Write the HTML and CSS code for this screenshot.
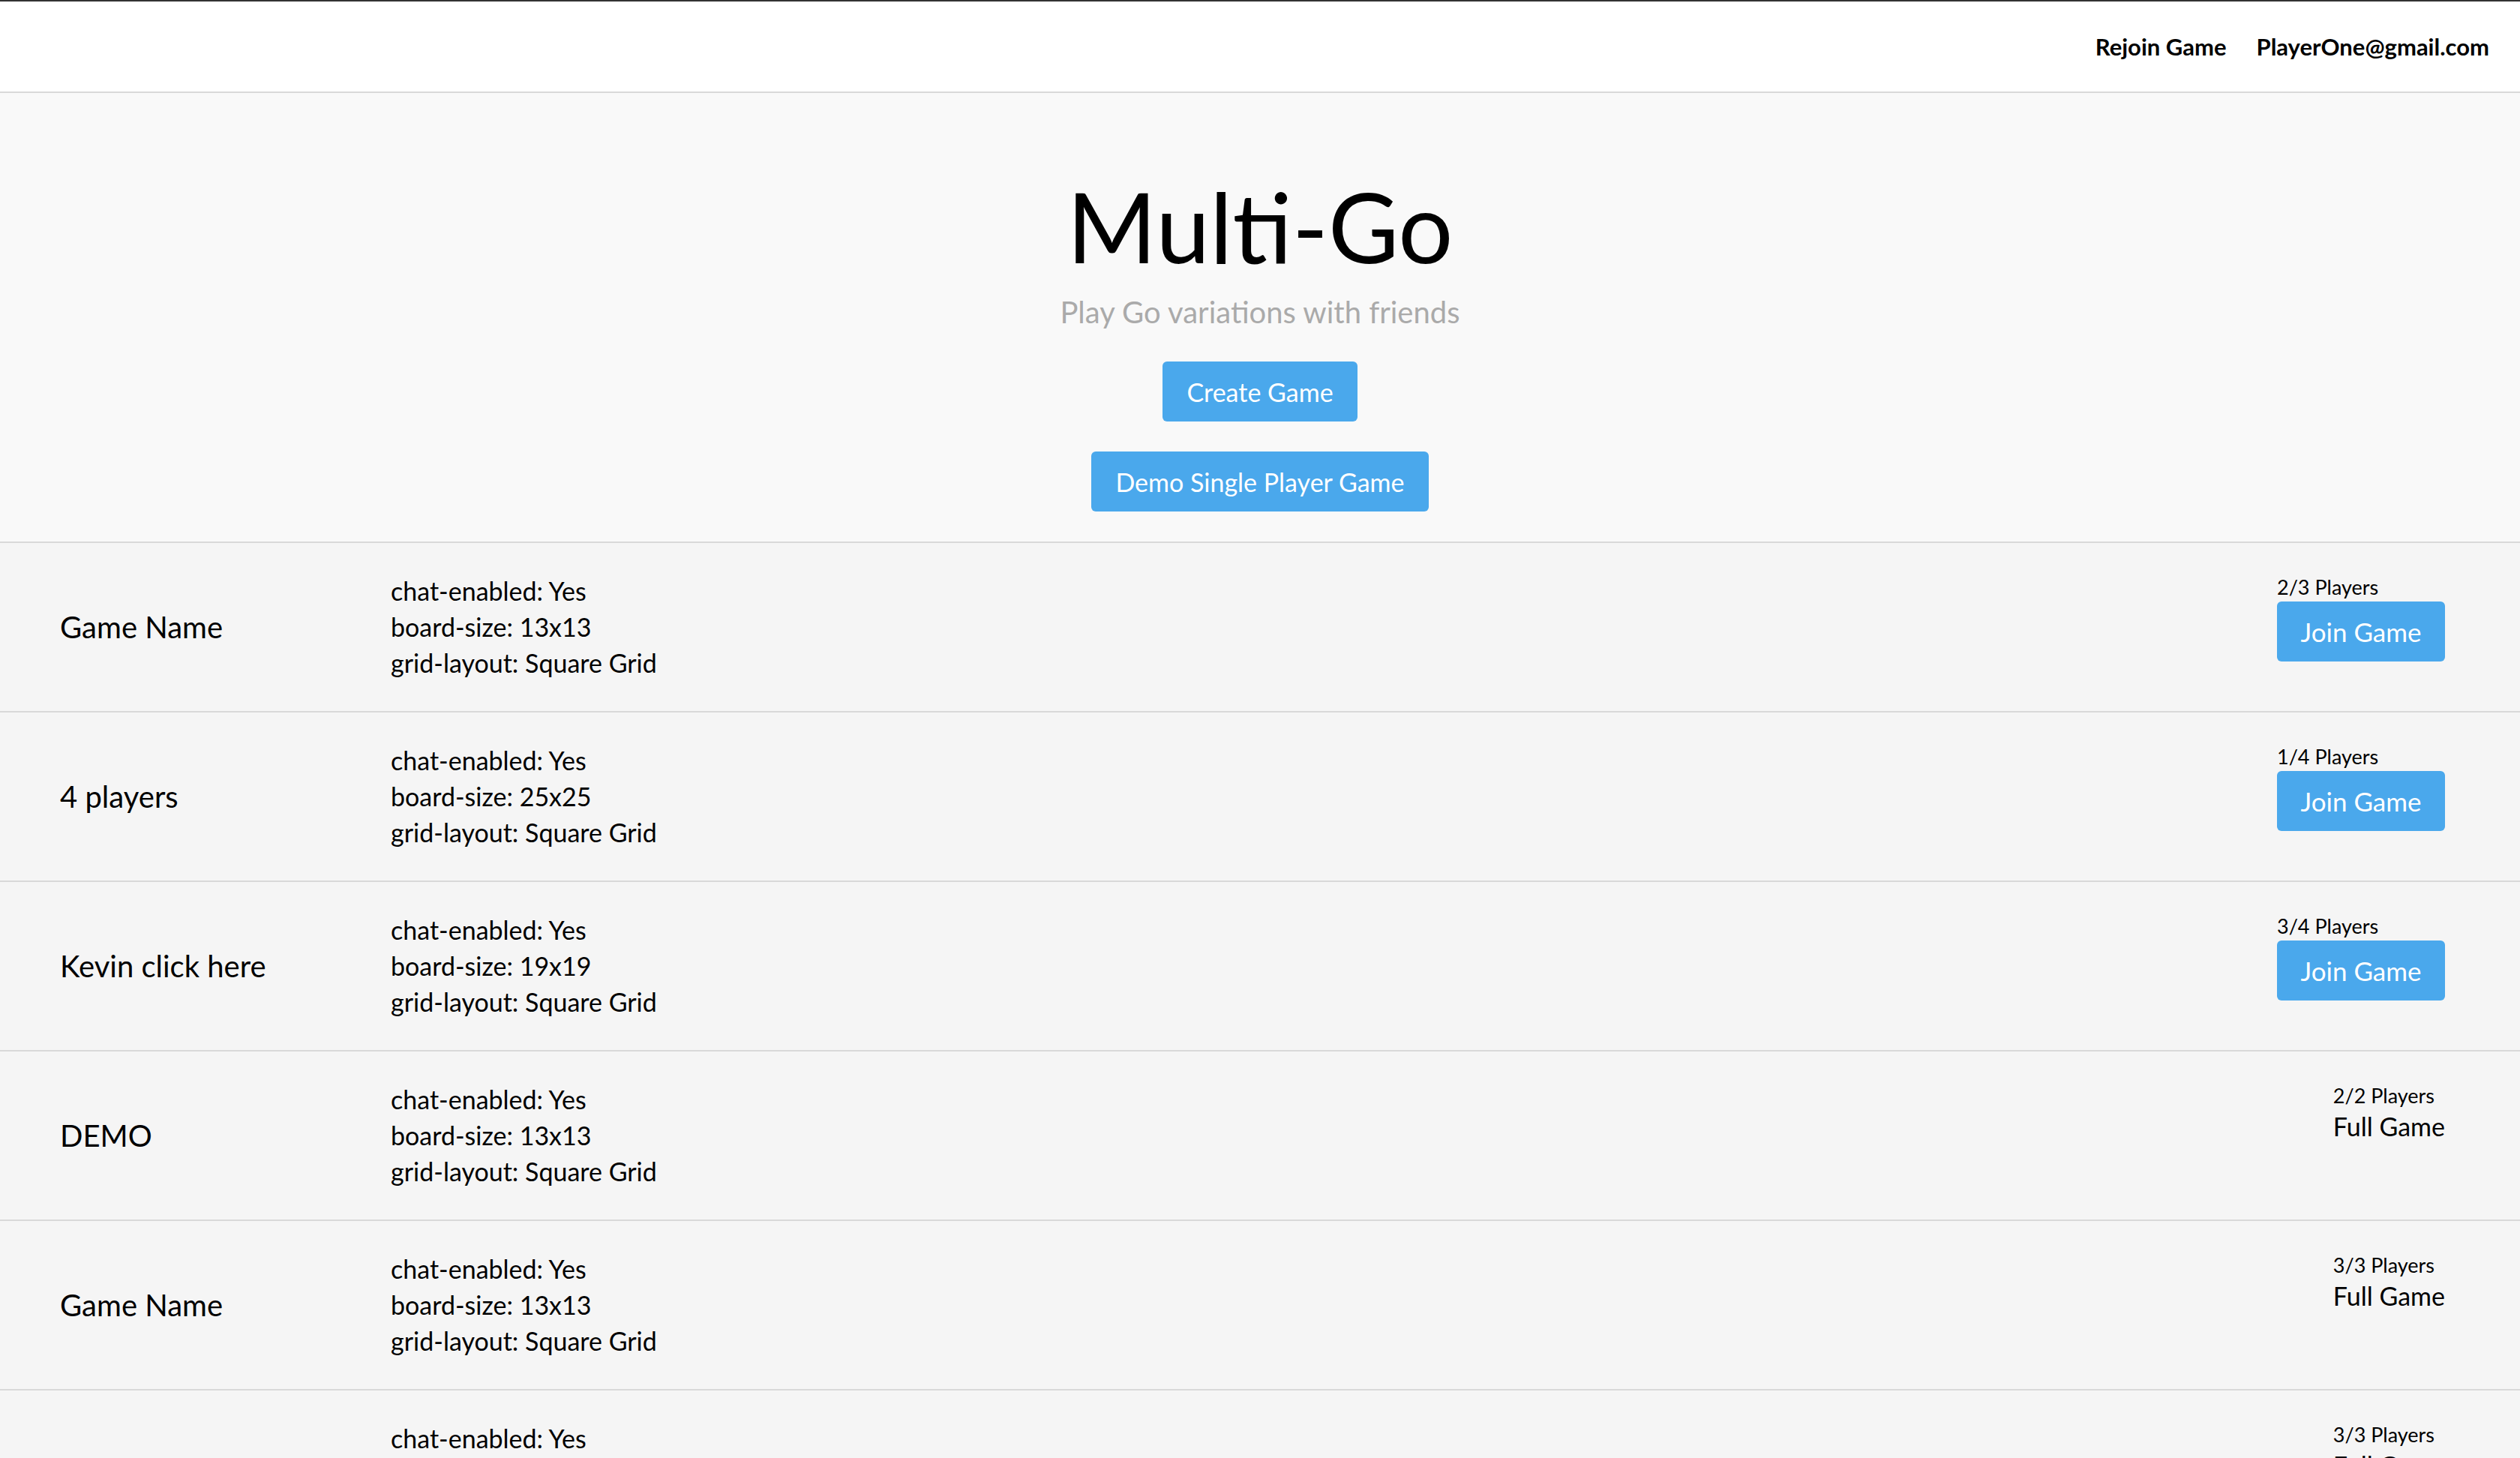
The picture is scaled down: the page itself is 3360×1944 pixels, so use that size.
FILE: index.html
```html
<!DOCTYPE html>
<html lang="en">
<head>
<meta charset="utf-8">
<title>Multi-Go</title>
<link rel="stylesheet" href="styles.css">
</head>
<body>
<header class="topbar">
  <nav class="nav">
    <a class="nav-link" href="#">Rejoin Game</a>
    <a class="nav-link" href="#">PlayerOne@gmail.com</a>
  </nav>
</header>
<section class="hero">
  <h1 class="hero-title">Multi-Go</h1>
  <p class="hero-sub">Play Go variations with friends</p>
  <button class="btn">Create Game</button>
  <button class="btn">Demo Single Player Game</button>
</section>
<main class="games">
  <div class="game-row">
    <div class="game-name">Game Name</div>
    <div class="game-details"><div>chat-enabled: Yes</div><div>board-size: 13x13</div><div>grid-layout: Square Grid</div></div>
    <div class="game-action"><div class="players">2/3 Players</div><button class="btn btn-join">Join Game</button></div>
  </div>
  <div class="game-row">
    <div class="game-name">4 players</div>
    <div class="game-details"><div>chat-enabled: Yes</div><div>board-size: 25x25</div><div>grid-layout: Square Grid</div></div>
    <div class="game-action"><div class="players">1/4 Players</div><button class="btn btn-join">Join Game</button></div>
  </div>
  <div class="game-row">
    <div class="game-name">Kevin click here</div>
    <div class="game-details"><div>chat-enabled: Yes</div><div>board-size: 19x19</div><div>grid-layout: Square Grid</div></div>
    <div class="game-action"><div class="players">3/4 Players</div><button class="btn btn-join">Join Game</button></div>
  </div>
  <div class="game-row">
    <div class="game-name">DEMO</div>
    <div class="game-details"><div>chat-enabled: Yes</div><div>board-size: 13x13</div><div>grid-layout: Square Grid</div></div>
    <div class="game-action"><div class="players">2/2 Players</div><div class="full">Full Game</div></div>
  </div>
  <div class="game-row">
    <div class="game-name">Game Name</div>
    <div class="game-details"><div>chat-enabled: Yes</div><div>board-size: 13x13</div><div>grid-layout: Square Grid</div></div>
    <div class="game-action"><div class="players">3/3 Players</div><div class="full">Full Game</div></div>
  </div>
  <div class="game-row">
    <div class="game-name">Game Name</div>
    <div class="game-details"><div>chat-enabled: Yes</div><div>board-size: 13x13</div><div>grid-layout: Square Grid</div></div>
    <div class="game-action"><div class="players">3/3 Players</div><div class="full">Full Game</div></div>
  </div>
</main>
</body>
</html>
```
FILE: styles.css
```css
* { box-sizing: border-box; }
html, body { margin: 0; padding: 0; }
body {
  font-family: Lato, "Open Sans", sans-serif;
  color: #000;
  background: #f5f5f5;
  overflow: hidden;
}
.topbar {
  height: 124px;
  background: #fff;
  border-top: 2px solid #333;
  border-bottom: 2px solid #d9d9d9;
  display: flex;
  align-items: center;
  justify-content: flex-end;
  padding: 0 41px 0 0;
}
.nav { display: flex; gap: 40px; }
.nav-link {
  color: #000;
  text-decoration: none;
  font-weight: 700;
  font-size: 31px;
}
.hero {
  background: #f9f9f9;
  border-bottom: 2px solid #d9d9d9;
  display: flex;
  flex-direction: column;
  align-items: center;
  padding: 91px 0 40px;
}
.hero-title {
  margin: 0;
  font-weight: 400;
  font-size: 129px;
  line-height: 173px;
}
.hero-sub {
  margin: 4px 0 42px;
  font-size: 40px;
  line-height: 48px;
  color: #aaa;
}
.btn {
  font-family: inherit;
  background: #4aa8ec;
  color: #fff;
  border: 0;
  border-radius: 6px;
  height: 80px;
  padding: 0 32px;
  font-size: 34px;
  cursor: pointer;
}
.btn + .btn { margin-top: 40px; }
.game-row {
  display: flex;
  align-items: center;
  padding: 40px 100px 40px 80px;
  border-bottom: 2px solid #d9d9d9;
  background: #f5f5f5;
}
.game-name {
  width: 441px;
  flex: none;
  font-size: 40px;
}
.game-details {
  font-size: 34px;
  line-height: 48px;
}
.game-action {
  margin-left: auto;
  align-self: flex-start;
  display: flex;
  flex-direction: column;
  align-items: flex-start;
}
.players {
  font-size: 27px;
  line-height: 38px;
}
.btn-join { width: 224px; font-size: 35px; padding: 0; }
.full {
  font-size: 34px;
  line-height: 43px;
}
```
